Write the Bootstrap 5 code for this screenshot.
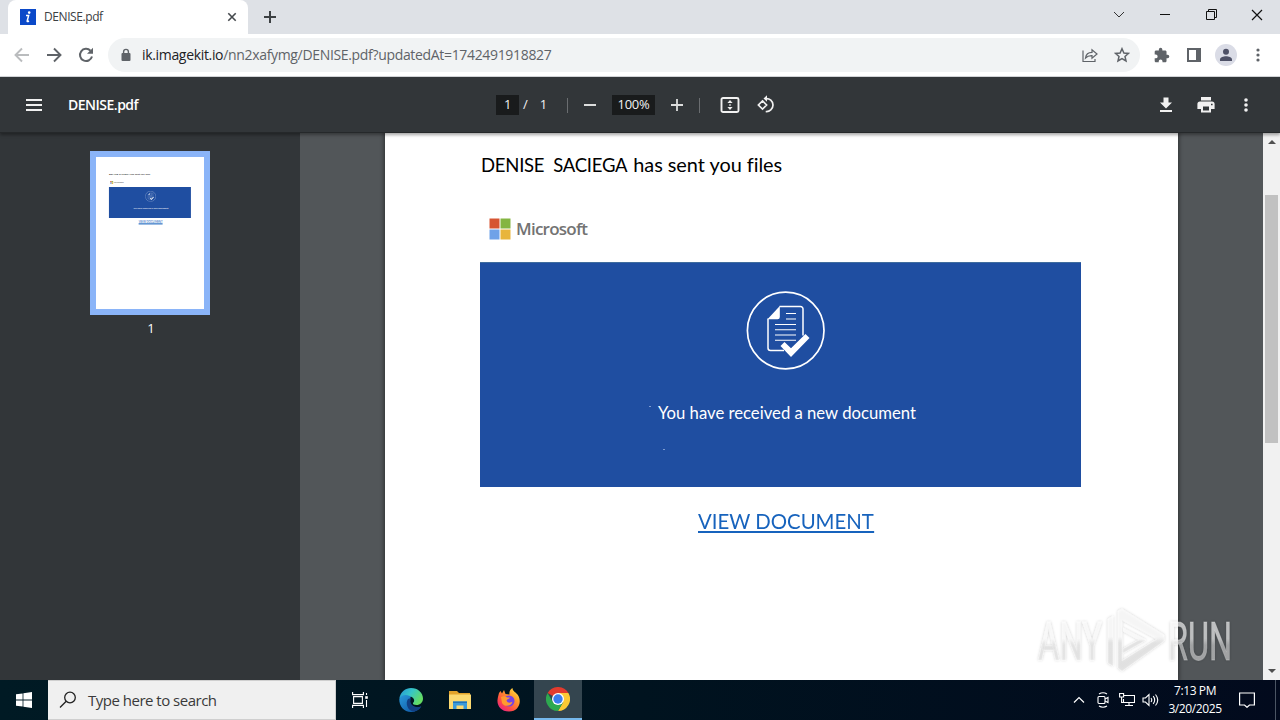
<!DOCTYPE html>
<html lang="en">
<head>
    <meta charset="UTF-8">
    <meta name="viewport" content="width=device-width, initial-scale=1.0">
    <title>DENISE.pdf</title>
    <link href="https://cdn.jsdelivr.net/npm/bootstrap@5.3.0/dist/css/bootstrap.min.css" rel="stylesheet">
    <style>
        body { width: 1280px; height: 720px; font-family: "Open Sans", "Noto Sans", sans-serif; color: #202124; }
        svg { display: block; flex: none; }
        .text-fit { display: inline-block; white-space: pre; line-height: 1; }

        /* Browser window */
        .tab-strip { height: 34px; background: #dee1e6; padding-left: 8px; }
        .browser-tab { width: 240px; background: #fff; border-radius: 8px 8px 0 0; padding: 0 11px 0 12px; }
        .tab-title { font-size: 12px; letter-spacing: -.42px; color: #3c4043; margin-left: 8px; }
        .window-btn { width: 46px; padding-bottom: 5px; }
        .address-bar { height: 43px; padding: 0 6px; border-bottom: 1px solid #d5d7da; }
        .tool-btn { width: 32px; height: 32px; color: #5f6368; }
        .omnibox { height: 34px; border-radius: 17px; background: #f1f3f4; margin: 0 6px; padding: 0 2px 0 12px; }
        .url-text { font-size: 14px; letter-spacing: -.33px; color: #5f6368; margin-left: 10px; }
        .url-host { color: #202124; }
        .avatar { width: 22px; height: 22px; background: #dadce6; overflow: hidden; }

        /* PDF toolbar */
        .pdf-bar { height: 56px; background: #323639; color: #f1f1f1; z-index: 2; box-shadow: 0 -1px 0 #25282a inset, 0 2px 3px rgba(0, 0, 0, .35); }
        .pdf-left { width: 496px; padding-left: 18px; }
        .pdf-name { font-size: 14px; font-weight: 600; letter-spacing: -.5px; margin-left: 18px; color: #fff; }
        .pdf-field { height: 20px; background: #191b1c; font-size: 13px; letter-spacing: -.3px; }
        .page-field { width: 23px; }
        .zoom-field { width: 43px; }
        .page-total { font-size: 13px; width: 48px; }
        .bar-line { width: 1px; height: 15px; background: #6a6d70; }
        .bar-step { width: 44px; }
        .pdf-right { padding-right: 18px; gap: 8px; }

        /* Viewer */
        .viewer { height: 547px; background: #525659; }
        .thumb-pane { width: 300px; background: #323639; padding-top: 18px; }
        .page-thumb { border: 6px solid #8ab4f8; background: #fff; width: 120px; height: 164px; }
        .thumb-number { font-size: 13px; line-height: 16px; margin-top: 5px; color: #fff; padding-left: 2px; }
        .page-area { width: 963px; padding-left: 85px; }
        .pdf-page { width: 793px; height: 547px; background: #fff; padding-left: 95px; box-shadow: 0 0 4px 1px rgba(0, 0, 0, .45); }
        .doc-heading { font-family: Lato, sans-serif; font-size: 18.5px; letter-spacing: -.25px; color: #000; height: 64px; line-height: 62px; white-space: pre; padding-left: 1px; }
        .heading-rest { font-size: 19.9px; letter-spacing: -.03px; margin-left: 2px; }
        .ms-row { height: 65px; padding: 21px 0 0 9px; }
        .ms-name { font-size: 17px; font-weight: 600; letter-spacing: -.75px; color: #737373; margin-left: 5px; line-height: 22px; }
        .banner { width: 601px; height: 225px; background: #1f4ea1; border-top: 1px solid #3f6c9e; color: #fff; }
        .banner-icon { margin: 25px 0 0 264px; }
        .banner-text { font-family: Lato, sans-serif; font-size: 16.7px; margin: 29px 0 0 169px; padding-left: 9px; line-height: 24px; white-space: nowrap; background: linear-gradient(#7c9bd0, #7c9bd0) no-repeat 0 5px / 2px 1px; }
        .doc-link { display: inline-block; font-family: Lato, sans-serif; font-size: 21.5px; line-height: 26px; color: #1763bd; text-decoration: none; border-bottom: 2px solid #1763bd; height: 25px; margin: 21px 0 0 218px; white-space: nowrap; transform: scaleX(.947); transform-origin: left; }
        .scroll-rail { width: 17px; background: #f1f1f1; padding: 7px 0; }
        .scroll-thumb { width: 13px; height: 248px; background: #c1c1c1; margin-top: 51px; }
        .watermark { right: 40px; bottom: 3px; z-index: 3; overflow: visible; }

        /* Taskbar */
        .win-bar { height: 40px; background: linear-gradient(90deg, #001a24, #00131f 50%, #020a1d); color: #fff; }
        .start-btn { width: 48px; }
        .search-box { width: 288px; background: #f0f0f0; border: 1px solid #cfcfcf; border-left: 0; color: #3a3a3a; padding-left: 11px; }
        .search-label { font-size: 15px; letter-spacing: -.5px; margin-left: 11px; }
        .task-app { width: 48px; }
        .task-list { gap: 1px; margin-left: 3px; }
        .task-app.running { background: #34454f; border-bottom: 2px solid #76b9ed; }
        .tray-icon { width: 24px; }
        .clock { width: 64px; font-size: 12px; line-height: 18px; letter-spacing: -.4px; }
        .notice-btn { width: 40px; }
        .desktop-edge { width: 13px; padding-left: 8px; }
        .desktop-edge div { width: 1px; background: #4b5563; }
    </style>
</head>
<body class="bg-white overflow-hidden">
<div class="d-flex flex-column h-100">

    <!-- Tab strip -->
    <div class="tab-strip d-flex">
        <div class="browser-tab d-flex align-items-center">
            <svg width="16" height="16" viewBox="0 0 16 16"><path fill="#0b49c9" d="M0 0h16v16H0z"/><circle cx="9.2" cy="3.6" r="1.3" fill="#fff"/><path d="M6 6.6h2.6L7.2 12q-.2 1.2 1.8 0" fill="none" stroke="#fff" stroke-width="1.5"/></svg>
            <span class="tab-title text-fit">DENISE.pdf</span>
            <svg class="ms-auto" width="10" height="10" viewBox="0 0 10 10" stroke="#45494d" stroke-width="1.6"><path d="M1.3 1.3l7.4 7.4M8.7 1.3L1.3 8.7"/></svg>
        </div>
        <div class="d-flex align-items-center ms-3">
            <svg width="12" height="12" viewBox="0 0 12 12" stroke="#3c4043" stroke-width="2"><path d="M6 0v12M0 6h12"/></svg>
        </div>
        <div class="d-flex ms-auto">
            <div class="window-btn d-flex align-items-center justify-content-center">
                <svg width="12" height="8" viewBox="0 0 12 8" fill="none" stroke="#333"><path d="M1 1l5 5 5-5"/></svg>
            </div>
            <div class="window-btn d-flex align-items-center justify-content-center">
                <svg width="10" height="9" viewBox="0 0 10 9"><path fill="#111" d="M0 4h10v1H0z"/></svg>
            </div>
            <div class="window-btn d-flex align-items-center justify-content-center">
                <svg width="11" height="11" viewBox="0 0 11 11" fill="none" stroke="#111"><path d="M.5 2.5h8v8h-8zM2.5 2.5v-2h8v8h-2"/></svg>
            </div>
            <div class="window-btn d-flex align-items-center justify-content-center">
                <svg width="12" height="12" viewBox="0 0 12 12" stroke="#111" stroke-width="1.2"><path d="M1 1l10 10M11 1L1 11"/></svg>
            </div>
        </div>
    </div>

    <!-- Address bar -->
    <div class="address-bar d-flex align-items-center bg-white">
        <div class="tool-btn d-flex align-items-center justify-content-center">
            <svg width="16" height="16" viewBox="0 0 16 16" fill="none" stroke="#babcbe" stroke-width="1.9"><path d="M15 8H2M8 1.5L1.5 8 8 14.5"/></svg>
        </div>
        <div class="tool-btn d-flex align-items-center justify-content-center">
            <svg width="16" height="16" viewBox="0 0 16 16" fill="none" stroke="currentColor" stroke-width="1.9"><path d="M1 8h13M8 1.5L14.5 8 8 14.5"/></svg>
        </div>
        <div class="tool-btn d-flex align-items-center justify-content-center">
            <svg width="16" height="16" viewBox="0 0 16 16"><path d="M12.5 3.7A6.1 6.1 0 1 0 14 9.6" fill="none" stroke="currentColor" stroke-width="2"/><path d="M15 .8v6H9z" fill="currentColor"/></svg>
        </div>
        <div class="omnibox d-flex align-items-center flex-grow-1">
            <svg width="12" height="14" viewBox="0 0 12 14"><rect x="1.5" y="5" width="9" height="8" rx="1" fill="#5f6368"/><path d="M3.6 6V3.800a2.400 2.400 0 0 1 4.800 0V6" fill="none" stroke="#5f6368" stroke-width="1.400"/></svg>
            <span class="url-text text-fit"><span class="url-host">ik.imagekit.io</span>/nn2xafymg/DENISE.pdf?updatedAt=1742491918827</span>
            <div class="tool-btn d-flex align-items-center justify-content-center ms-auto">
                <svg width="16" height="16" viewBox="0 0 16 16" fill="none" stroke="currentColor" stroke-width="1.200"><path d="M1 3.500v11h12V12M3.500 11c.5-4 3-5.500 6.500-5.600V2.700l5 4.300-5 4.300V8.600c-2.700-.1-4.700.4-6.500 2.400z"/></svg>
            </div>
            <div class="tool-btn d-flex align-items-center justify-content-center">
                <svg width="16" height="16" viewBox="0 0 16 16" fill="none" stroke="currentColor" stroke-width="1.500"><path d="M8 1.700l1.900 4.300 4.600.4-3.500 3.100 1 4.500L8 11.600 4 14l1-4.500L1.500 6.400 6.100 6z"/></svg>
            </div>
        </div>
        <div class="tool-btn d-flex align-items-center justify-content-center">
            <svg width="16" height="16" viewBox="1 0 23 23" fill="currentColor"><path d="M20.500 11H19V7c0-1.100-.9-2-2-2h-4V3.500a2.500 2.500 0 0 0-5 0V5H4c-1.100 0-2 .9-2 2v3.800h1.500a2.700 2.700 0 0 1 0 5.400H2V20c0 1.100.9 2 2 2h3.800v-1.500a2.700 2.700 0 0 1 5.400 0V22H17c1.100 0 2-.9 2-2v-4h1.500a2.500 2.500 0 0 0 0-5z"/></svg>
        </div>
        <div class="tool-btn d-flex align-items-center justify-content-center">
            <svg width="14" height="14" viewBox="0 0 14 14" fill="currentColor"><path fill-rule="evenodd" d="M0 0h14v14H0zM2 2v10h7V2z"/></svg>
        </div>
        <div class="tool-btn d-flex align-items-center justify-content-center">
            <div class="avatar rounded-circle">
                <svg width="22" height="22" viewBox="0 0 22 22" fill="#4d5066"><circle cx="11" cy="7.700" r="3"/><path d="M5 17v-1.500c0-2.200 3.500-3.300 6-3.300s6 1.100 6 3.300V17z"/></svg>
            </div>
        </div>
        <div class="tool-btn d-flex align-items-center justify-content-center">
            <svg width="4" height="14" viewBox="0 0 4 14" fill="currentColor"><circle cx="2" cy="2" r="1.600"/><circle cx="2" cy="7" r="1.600"/><circle cx="2" cy="12" r="1.600"/></svg>
        </div>
    </div>

    <!-- PDF toolbar -->
    <div class="pdf-bar position-relative d-flex align-items-center">
        <div class="pdf-left d-flex align-items-center">
            <div class="tool-btn d-flex align-items-center justify-content-center">
                <svg width="16" height="12" viewBox="0 0 16 12" fill="#f1f1f1"><path d="M0 0h16v2H0zM0 5h16v2H0zM0 10h16v2H0z"/></svg>
            </div>
            <span class="pdf-name text-fit">DENISE.pdf</span>
        </div>
        <div class="pdf-field page-field d-flex align-items-center justify-content-center">1</div>
        <div class="page-total d-flex"><span class="ms-1">/</span><span class="ms-2 ps-1">1</span></div>
        <div class="bar-line"></div>
        <div class="bar-step d-flex align-items-center justify-content-center">
            <svg width="12" height="2" viewBox="0 0 12 2"><path fill="#dcdddd" d="M0 0h12v2H0z"/></svg>
        </div>
        <div class="pdf-field zoom-field d-flex align-items-center justify-content-center">100%</div>
        <div class="bar-step d-flex align-items-center justify-content-center">
            <svg width="12" height="12" viewBox="0 0 12 12" stroke="#dcdddd" stroke-width="1.800"><path d="M6 0v12M0 6h12"/></svg>
        </div>
        <div class="bar-line"></div>
        <div class="d-flex align-items-center ms-3">
            <svg class="ms-1" width="20" height="16" viewBox="0 0 20 16"><rect x="1.500" y="1" width="17" height="14" rx="1.500" fill="none" stroke="#f1f1f1" stroke-width="1.900"/><path fill="#f1f1f1" d="M10 3L12.600 6H7.400zM10 13L7.400 10h5.200zM9.300 7.300h1.400v1.400H9.300z"/></svg>
            <svg class="ms-3" width="20" height="20" viewBox="0 0 20 20" fill="none" stroke="#f1f1f1" stroke-width="1.700"><path d="M6.500 5.900l4.100 4.100-4.100 4.100L2.400 10zM9.700 3.600a6.500 6.500 0 1 1 0 12.900"/><path d="M11 .3v6.400L7.500 3.500z" fill="#f1f1f1" stroke="none"/></svg>
        </div>
        <div class="pdf-right d-flex ms-auto">
            <div class="tool-btn d-flex align-items-center justify-content-center">
                <svg width="14" height="16" viewBox="0 0 14 16" fill="#f1f1f1"><path d="M4.500.500h5v5H13l-6 6-6-6h3.500zM1 13h12v2H1z"/></svg>
            </div>
            <div class="tool-btn d-flex align-items-center justify-content-center">
                <svg width="18" height="16" viewBox="0 0 18 16" fill="#f1f1f1"><path fill-rule="evenodd" d="M4 0h10v3.500H4zM3 4.500h12a2.600 2.600 0 0 1 2.600 2.600V12H14v3.500H4V12H.4V7.100A2.600 2.600 0 0 1 3 4.500zM6 9.500v4h6v-4zM14 6.700v1.600h1.600V6.700z"/></svg>
            </div>
            <div class="tool-btn d-flex align-items-center justify-content-center">
                <svg width="4" height="14" viewBox="0 0 4 14" fill="#f1f1f1"><circle cx="2" cy="2" r="1.800"/><circle cx="2" cy="7" r="1.800"/><circle cx="2" cy="12" r="1.800"/></svg>
            </div>
        </div>
    </div>

    <!-- Viewer -->
    <div class="viewer position-relative d-flex">
        <div class="thumb-pane d-flex flex-column align-items-center">
            <div class="page-thumb">
                <svg width="108" height="152" viewBox="0 0 793 1116">
                    <text x="96" y="131" font-family="Lato" font-size="19.200" textLength="301">DENISE  SACIEGA has sent you files</text>
                    <path fill="#d65532" d="M105 177h10v10h-10z"/><path fill="#84b542" d="M116 177h10v10h-10z"/><path fill="#6fa2e8" d="M105 188h10v10h-10z"/><path fill="#e8b53c" d="M116 188h10v10h-10z"/>
                    <text x="131" y="194" font-size="17" font-weight="600" fill="#737373" textLength="72">Microsoft</text>
                    <path fill="#1f4ea1" d="M95 220h602v228H95z"/>
                    <use href="#doc-check" x="361" y="249" width="80" height="80"/>
                    <text x="273" y="380" font-family="Lato" font-size="16.700" fill="#fff" textLength="258">You have received a new document</text>
                    <text x="313" y="487" font-family="Lato" font-size="20.500" fill="#1763bd" textLength="176">VIEW DOCUMENT</text>
                    <path fill="#1763bd" d="M313 487h176v8H313z"/>
                </svg>
            </div>
            <div class="thumb-number">1</div>
        </div>

        <div class="page-area overflow-hidden">
            <div class="pdf-page">
                <div class="doc-heading"><span>DENISE  SACIEGA </span><span class="heading-rest">has sent you files</span></div>
                <div class="ms-row d-flex align-items-start">
                    <svg width="22" height="22" viewBox="0 0 22 22"><path fill="#d65532" d="M.5.500h10v10h-10z"/><path fill="#84b542" d="M11.500.500h10v10h-10z"/><path fill="#6fa2e8" d="M.5 11.500h10v10h-10z"/><path fill="#e8b53c" d="M11.500 11.500h10v10h-10z"/></svg>
                    <span class="ms-name">Microsoft</span>
                </div>
                <div class="banner d-flex flex-column align-items-start">
                    <svg class="banner-icon" width="84" height="84" viewBox="-2 -2.500 84 84">
                        <symbol id="doc-check" viewBox="0 0 80 80">
                            <circle cx="39.700" cy="40" r="38.300" fill="none" stroke="#fff" stroke-width="1.700"/>
                            <path d="M33.500 16H54.500a2.500 2.500 0 0 1 2.500 2.500V45" fill="none" stroke="#fff" stroke-width="1.500"/>
                            <path d="M22 28v29.500a2.500 2.500 0 0 0 2.500 2.500H38" fill="none" stroke="#fff" stroke-width="1.500"/>
                            <path d="M21.500 28.700L33.800 15.500v11a2.200 2.200 0 0 1-2.200 2.200z" fill="#fff"/>
                            <path d="M40 23h10M40 28.500h10M29 34h21M29 39.300h21M29 44.500h21M29 49.800h21" stroke="#fff" stroke-width="1.100"/>
                            <path d="M34.500 55.500l4-4 6.500 6.300L59.500 43.500l4 4L45 66.500z" fill="#fff"/>
                        </symbol>
                        <use href="#doc-check" width="80" height="80"/>
                    </svg>
                    <div class="banner-text"><span>You have received a new document</span></div>
                    <!-- stray mark below the line -->
                    <svg width="200" height="50" viewBox="0 0 200 50" fill="#7c9bd0"><path d="M183 24h2v1h-2z"/></svg>
                </div>
                <a class="doc-link" href="#"><span>VIEW DOCUMENT</span></a>
            </div>
        </div>

        <div class="scroll-rail d-flex flex-column align-items-center">
            <svg width="8" height="4" viewBox="0 0 8 4"><path fill="#505050" d="M4 0l4 4H0z"/></svg>
            <div class="scroll-thumb"></div>
            <svg class="mt-auto" width="8" height="4" viewBox="0 0 8 4"><path fill="#505050" d="M0 0h8L4 4z"/></svg>
        </div>

        <svg class="watermark position-absolute" width="206" height="74" viewBox="0 0 206 74">
            <defs>
                <linearGradient id="wm-fade" x1="0" y1="0" x2="0" y2="1"><stop offset=".45" stop-color="#fff" stop-opacity=".6"/><stop offset=".55" stop-color="#ddd" stop-opacity=".55"/></linearGradient>
                <filter id="wm-shadow" x="-10%" y="-10%" width="120%" height="120%"><feDropShadow dx="0" dy="0" stdDeviation="1.500" flood-color="#000" flood-opacity=".35"/></filter>
            </defs>
            <g filter="url(#wm-shadow)" fill="url(#wm-fade)" stroke="#fff" stroke-opacity=".25" stroke-width=".8" font-family="Roboto" font-size="53" transform="translate(2 2)">
                <text x="2" y="55" textLength="64" lengthAdjust="spacingAndGlyphs">ANY</text>
                <text x="132" y="55" textLength="64" lengthAdjust="spacingAndGlyphs">RUN</text>
                <path fill-rule="evenodd" d="M72 14l5-3v50l-5-3zM82 6l4-2 42 26v6L86 66l-4-3V9zM86 15v41l35-22z"/>
                <path d="M87 23l23 12-23 13v-4l16-9-16-9z"/>
            </g>
        </svg>
    </div>

    <!-- Taskbar -->
    <div class="win-bar d-flex">
        <div class="start-btn d-flex align-items-center justify-content-center">
            <svg width="16" height="16" viewBox="0 0 16 16" fill="#fff"><path d="M0 2.300L6.600 1.400v6.200H0zM7.400 1.300L16 0v7.600H7.400zM0 8.400h6.600v6.200L0 13.700zM7.400 8.400H16V16l-8.600-1.300z"/></svg>
        </div>
        <div class="search-box d-flex align-items-center">
            <svg width="18" height="18" viewBox="0 0 18 18" fill="none" stroke="#222" stroke-width="1.300"><circle cx="11" cy="6.500" r="5.300"/><path d="M7.200 10.300L1 16.500"/></svg>
            <span class="search-label text-fit">Type here to search</span>
        </div>
        <div class="task-app d-flex align-items-center justify-content-center">
            <svg width="16" height="16" viewBox="0 0 16 16" fill="none" stroke="#fff" stroke-width="1.100"><path d="M.6 0v2.600h10.800V0M.6 16v-2.600h10.800V16M1.600 4.600h8.800v6.800H1.600zM14.500 1v2M14.500 8v7"/><path d="M13.200 4.200h2.600v2.600h-2.600z" fill="#fff" stroke="none"/></svg>
        </div>
        <div class="task-list d-flex">
            <div class="task-app d-flex align-items-center justify-content-center">
                <svg width="24" height="24" viewBox="0 0 24 24">
                    <defs>
                        <linearGradient id="edge-top" x1="0" y1="0" x2="1" y2=".5"><stop offset="0" stop-color="#2493d6"/><stop offset=".5" stop-color="#36c5c8"/><stop offset="1" stop-color="#64dc62"/></linearGradient>
                        <linearGradient id="edge-low" x1="0" y1="0" x2="1" y2="1"><stop offset="0" stop-color="#2a9bdd"/><stop offset="1" stop-color="#0c4e9c"/></linearGradient>
                    </defs>
                    <path fill="url(#edge-low)" d="M.3 11C0 18 5 24 12 24c4.500 0 8-2 10-5.500-4 2-9 .5-10.500-3C10 12 11 9 13 8 9 4 2 5 .3 11z"/>
                    <path fill="#123f82" d="M9 11c-3 4-.5 12 6 12.500 3.500-.5 6-2.500 7.300-5.200-4.500 2-9.300.2-10.500-3-.8-2-.3-4 .6-5.300z"/>
                    <path fill="url(#edge-top)" d="M.3 10.500C1.500 4 6.500 0 12 0c7 0 12 5 12 10.500 0 4-3 6.500-6.500 6.500-2.500 0-4-1-3.500-2 1.800-1.500 1.500-4-.5-5.500C9 6 3 6 .3 10.500z"/>
                </svg>
            </div>
            <div class="task-app d-flex align-items-center justify-content-center">
                <svg width="22" height="18" viewBox="0 0 22 18"><path fill="#e2a32a" d="M0 0h8l2 2h11v4H0z"/><path fill="#fbd970" d="M0 3.500h22V18H0z"/><path fill="#3a9ad9" d="M4 10.500h14V18h-3.500v-3.500h-7V18H4z"/><path fill="#1f72b8" d="M4 10.500h14v1.500H4z"/></svg>
            </div>
            <div class="task-app d-flex align-items-center justify-content-center">
                <svg width="24" height="24" viewBox="0 0 24 24">
                    <defs>
                        <linearGradient id="fox" x1="1" y1="0" x2=".2" y2="1"><stop offset="0" stop-color="#fff04a"/><stop offset=".4" stop-color="#ff9a2a"/><stop offset=".75" stop-color="#ff4a45"/><stop offset="1" stop-color="#e5208a"/></linearGradient>
                    </defs>
                    <path fill="url(#fox)" d="M2 5l1.500-2L5 5.500 7 2l1.500 4 4 .5C12 4 13 1.500 15.500 0c0 3 3 4 5 6.500 5 6.500 1.500 17-8.500 17C4 23.500 0 17.500.5 12 .8 9 1.500 7 2 5z"/>
                    <circle cx="12" cy="13" r="5.500" fill="#7542e5"/><path fill="#ff9b2f" d="M4 9c3-1.500 5-.5 6 .5h3c-.5 1.500-3 1.500-3.500 3 1 3 4.500 2.500 6 1-1 5-8 6-10.500 1.500z"/>
                </svg>
            </div>
            <div class="task-app running d-flex align-items-center justify-content-center">
                <svg width="24" height="24" viewBox="0 0 24 24"><path fill="#e33b2e" d="M12 12L1.600 6A12 12 0 0 1 22.400 6z"/><path fill="#fcc934" d="M12 12V6h10.400A12 12 0 0 1 12 24l5.200-9z"/><path fill="#2da94f" d="M12 12l5.200 3L12 24A12 12 0 0 1 1.600 6l5.200 9z"/><circle cx="12" cy="12" r="6" fill="#fff"/><circle cx="12" cy="12" r="4.700" fill="#3b7ded"/></svg>
            </div>
        </div>

        <div class="d-flex ms-auto align-items-center">
            <div class="tray-icon d-flex justify-content-center">
                <svg width="12" height="8" viewBox="0 0 12 8" fill="none" stroke="#fff" stroke-width="1.200"><path d="M1 6.500l5-5 5 5"/></svg>
            </div>
            <div class="tray-icon d-flex justify-content-center">
                <svg width="12" height="16" viewBox="0 0 12 16" fill="none" stroke="#fff" stroke-width="1.100"><rect x="1" y="4.500" width="7" height="7" rx="1"/><path d="M8 7l3-1.500v5L8 9M2 2q4-2.500 8 0M2 14q4 2.500 8 0"/></svg>
            </div>
            <div class="tray-icon d-flex justify-content-center">
                <svg width="16" height="16" viewBox="0 0 16 16" fill="none" stroke="#fff" stroke-width="1.100"><path d="M5 3.500h10.500v7H4.500V7M10 10.500v3M6 13.500h8M.6 1.500h4v3.500h-4zM2.600 5v5.500H5"/></svg>
            </div>
            <div class="tray-icon d-flex justify-content-center">
                <svg width="18" height="14" viewBox="0 0 18 14" fill="none" stroke="#fff" stroke-width="1.100"><path d="M1 5h2.500L7 1.500v11L3.500 9H1zM9 5q1.500 2 0 4M11.200 3.200q3 3.800 0 7.600M13.500 1.500q4.500 5.500 0 11"/></svg>
            </div>
            <div class="clock d-flex flex-column align-items-center"><span>7:13 PM</span><span>3/20/2025</span></div>
            <div class="notice-btn d-flex justify-content-center">
                <svg width="16" height="16" viewBox="0 0 16 16" fill="none" stroke="#fff" stroke-width="1.200"><path d="M.6 1h14.800v12H10.500L8 15.300 5.500 13H.6z"/></svg>
            </div>
            <div class="desktop-edge d-flex align-self-stretch"><div></div></div>
        </div>
    </div>
</div>
<script src="https://cdn.jsdelivr.net/npm/bootstrap@5.3.0/dist/js/bootstrap.bundle.min.js"></script>
</body>
</html>
